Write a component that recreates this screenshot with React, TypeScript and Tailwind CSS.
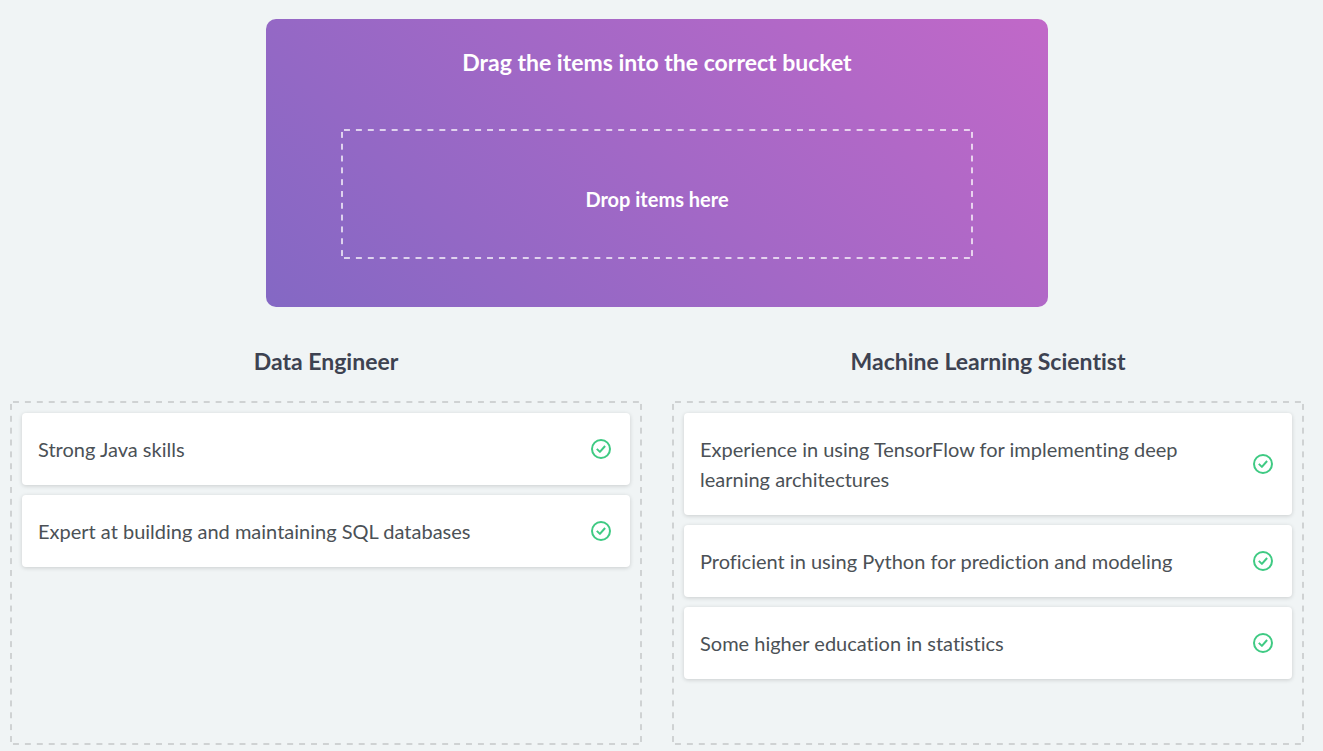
import React from "react";

type Bucket = { title: string; items: string[] };

const buckets: Bucket[] = [
  {
    title: "Data Engineer",
    items: ["Strong Java skills", "Expert at building and maintaining SQL databases"],
  },
  {
    title: "Machine Learning Scientist",
    items: [
      "Experience in using TensorFlow for implementing deep learning architectures",
      "Proficient in using Python for prediction and modeling",
      "Some higher education in statistics",
    ],
  },
];

// Evenly spaced 6px dashes along all four edges; the colour comes from --dash.
const dashedFrame =
  "bg-[linear-gradient(90deg,transparent_25%,var(--dash)_25%_75%,transparent_75%),linear-gradient(90deg,transparent_25%,var(--dash)_25%_75%,transparent_75%),linear-gradient(transparent_25%,var(--dash)_25%_75%,transparent_75%),linear-gradient(transparent_25%,var(--dash)_25%_75%,transparent_75%)] [background-size:12px_2px,12px_2px,2px_12px,2px_12px] [background-position:left_top,left_bottom,left_top,right_top] [background-repeat:round_no-repeat,round_no-repeat,no-repeat_round,no-repeat_round]";

function CheckIcon() {
  return (
    <svg
      className="size-5 shrink-0 text-[#3fca83]"
      viewBox="0 0 20 20"
      fill="none"
      stroke="currentColor"
      strokeWidth="2"
      role="img"
      aria-label="Correct"
    >
      <circle cx="10" cy="10" r="9" />
      <path d="M5.8 9.9 8.9 12.9 14.1 7" strokeWidth="2" strokeLinejoin="round" />
    </svg>
  );
}

function Card({ text }: { text: string }) {
  return (
    <li
      draggable
      className="flex items-center justify-between rounded bg-white py-[21px] pr-[19px] pl-4 shadow-[0_1px_4px_rgba(0,0,0,0.16)]"
    >
      <span className="max-w-[500px] text-xl leading-[30px] text-[#4b5156]">{text}</span>
      <CheckIcon />
    </li>
  );
}

function BucketColumn({ title, items }: Bucket) {
  return (
    <section className="min-w-0 flex-1">
      <h2 className="text-center text-[23px] leading-9 font-bold text-[#3d4251]">{title}</h2>
      <ul className={`mt-[22px] flex min-h-[344px] flex-col gap-2.5 p-3 [--dash:#cfd2d3] ${dashedFrame}`}>
        {items.map((item) => (
          <Card key={item} text={item} />
        ))}
      </ul>
    </section>
  );
}

export default function App() {
  return (
    <main className="min-h-screen bg-[#f0f4f5] pt-[19px] pr-[19px] pb-1.5 pl-2.5 font-['Lato',sans-serif] [font-variant-ligatures:none]">
      <section className="mx-auto max-w-[782px] rounded-[10px] bg-[linear-gradient(45deg,#8468c4,#c168c8)] px-[75px] pt-[25px] pb-12 text-white">
        <h1 className="text-center text-[23px] leading-9 font-bold">Drag the items into the correct bucket</h1>
        <div
          className={`mt-[49px] flex h-[130px] items-center justify-center pt-2.5 [--dash:rgba(255,255,255,0.7)] ${dashedFrame}`}
        >
          <p className="text-xl leading-[30px] font-bold">Drop items here</p>
        </div>
      </section>
      <div className="mt-9 flex gap-[30px]">
        {buckets.map((bucket) => (
          <BucketColumn key={bucket.title} {...bucket} />
        ))}
      </div>
    </main>
  );
}
